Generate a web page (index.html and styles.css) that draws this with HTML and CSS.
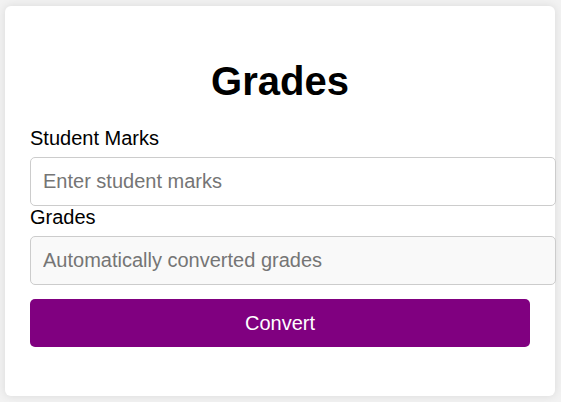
FILE: index.html
```html
<!DOCTYPE html>
<html>
<head>
<meta charset="utf-8">
<link rel="stylesheet" href="styles.css">
</head>
<body>
<div class="card">
  <h1 class="title">Grades</h1>
  <label class="label" for="marks">Student Marks</label>
  <input class="field" id="marks" type="text" placeholder="Enter student marks">
  <label class="label" for="grades">Grades</label>
  <input class="field field-readonly" id="grades" type="text" placeholder="Automatically converted grades" readonly>
  <button class="btn" type="button">Convert</button>
</div>
</body>
</html>
```
FILE: styles.css
```css
html, body {
  margin: 0;
  padding: 0;
  background: #f2f2f2;
  font-family: "Liberation Sans", Arial, sans-serif;
}
body {
  padding-top: 6px;
  height: 396px;
  overflow: hidden;
}
.card {
  width: 500px;
  margin: 0 0 0 5px;
  padding: 25px;
  background: #fff;
  border-radius: 6px;
  box-shadow: 0 0 10px rgba(0, 0, 0, 0.1);
  height: 340px;
}
.title {
  font-size: 40px;
  font-weight: bold;
  text-align: center;
  color: #000;
  margin: 27px 0 23px;
  line-height: 46px;
}
.label {
  display: block;
  font-size: 20px;
  line-height: 23px;
  color: #000;
  margin-bottom: 7px;
}
.field {
  display: block;
  width: 100%;
  margin: 0;
  padding: 12px;
  font-family: "Liberation Sans", Arial, sans-serif;
  font-size: 20px;
  line-height: 23px;
  height: 23px;
  border: 1px solid #ccc;
  border-radius: 5px;
  background: #fff;
  color: #000;
  outline: none;
}
.field::placeholder {
  color: #757575;
}
.field-readonly {
  background: #f9f9f9;
}
.btn {
  display: block;
  width: 100%;
  margin-top: 14px;
  height: 48px;
  padding: 0;
  border: none;
  border-radius: 5px;
  background: #800080;
  color: #fff;
  font-family: "Liberation Sans", Arial, sans-serif;
  font-size: 20px;
  cursor: pointer;
}
```
